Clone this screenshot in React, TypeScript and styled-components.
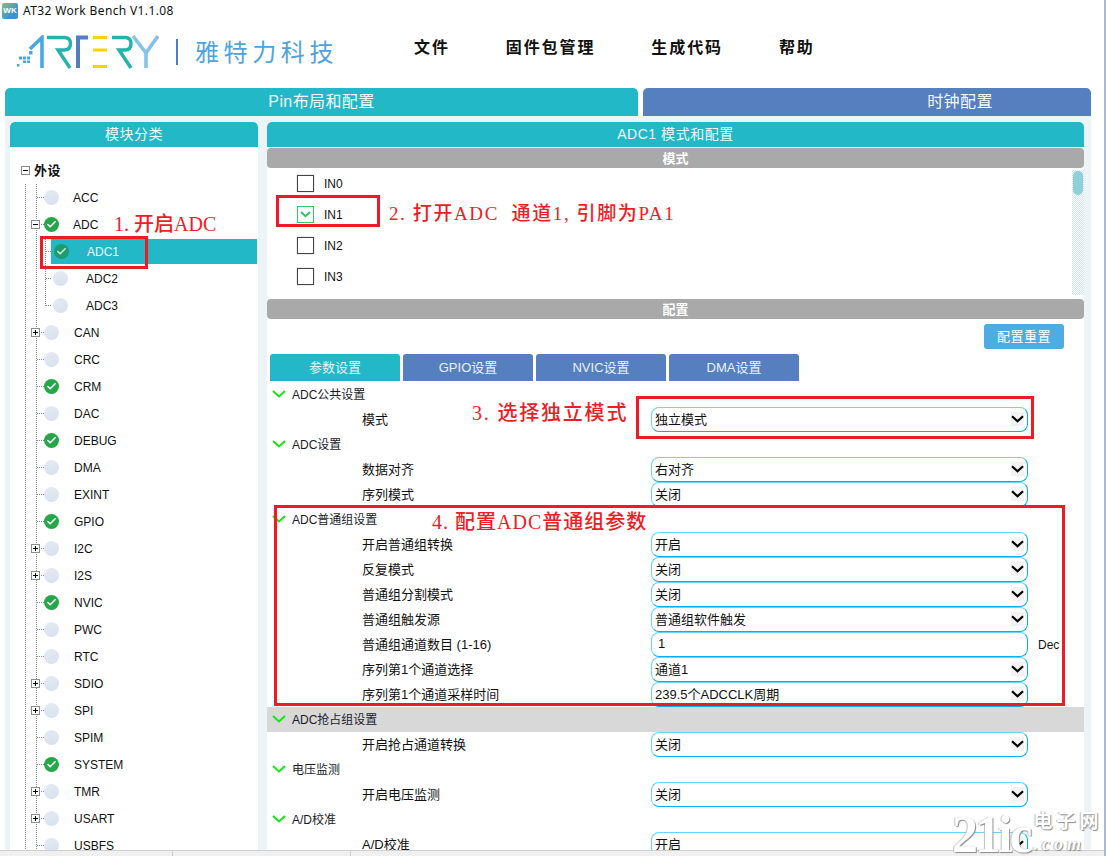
import React from "react";
import styled, { createGlobalStyle } from "styled-components";
import { Check } from "lucide-react";

const GlobalStyle = createGlobalStyle`
  html, body {
    margin: 0;
    padding: 0;
    background: #fff;
  }
  * {
    box-sizing: border-box;
  }
`;

const Frame = styled.div`
  position: relative;
  display: flex;
  flex-direction: column;
  width: 1106px;
  height: 856px;
  overflow: hidden;
  border-right: 2px solid #aeb9cd;
  background: #fff;
  color: #111;
  font-family: "Liberation Sans", "Noto Sans CJK SC", sans-serif;
  font-size: 12px;
`;

const TitleBar = styled.div`
  display: flex;
  align-items: center;
  gap: 5px;
  height: 22px;
  padding: 0 0 1px 2px;
  flex: none;
  font-family: "Noto Sans", sans-serif;
  font-size: 12px;
  letter-spacing: 0.36px;
`;

const AppIcon = styled.div`
  display: flex;
  align-items: center;
  justify-content: center;
  width: 16px;
  height: 16px;
  border-radius: 2px;
  background: linear-gradient(135deg, #7cc576, #3f8fd2 70%);
  color: #fff;
  font-family: "Liberation Sans", sans-serif;
  font-size: 8px;
  font-weight: bold;
  letter-spacing: 0;
`;

const Header = styled.div`
  display: flex;
  align-items: flex-start;
  height: 66px;
  flex: none;
`;

const LogoBox = styled.div`
  display: flex;
  align-items: center;
  width: 414px;
  height: 60px;
  padding-left: 17px;
`;

const BrandText = styled.span`
  padding-bottom: 3px;
  color: #4fa3dc;
  font-family: "Noto Sans CJK SC", sans-serif;
  font-size: 24px;
  letter-spacing: 4.6px;
`;

const Menu = styled.nav`
  display: flex;
  gap: 56px;
  padding-top: 12px;
`;

const MenuItem = styled.span`
  font-family: "Noto Sans CJK SC", sans-serif;
  font-size: 16px;
  font-weight: bold;
  line-height: 24px;
  letter-spacing: 1.9px;
  color: #111;
`;

const TopTabs = styled.div`
  display: flex;
  gap: 5px;
  height: 28px;
  width: 1086px;
  margin-left: 5px;
  flex: none;
`;

const TopTab = styled.div<{ $active?: boolean; $w: number; $shift?: number }>`
  display: flex;
  align-items: center;
  justify-content: center;
  width: ${(p) => p.$w}px;
  padding: 0 0 4px ${(p) => p.$shift ?? 0}px;
  border-radius: 5px 5px 0 0;
  background: ${(p) => (p.$active ? "#22b8c7" : "#567fbf")};
  color: #f2fbfc;
  font-family: "Liberation Sans", "Noto Sans CJK SC", sans-serif;
  font-size: 16px;
  letter-spacing: 0.4px;
`;

const Workspace = styled.div`
  display: flex;
  gap: 9px;
  flex: 1;
  min-height: 0;
  width: 1086px;
  margin-left: 5px;
  padding: 6px 7px 0 5px;
  background: #ecf4f7;
`;

const LeftPanel = styled.div`
  display: flex;
  flex-direction: column;
  width: 248px;
  flex: none;
  background: #fff;
`;

const RightPanel = styled.div`
  display: flex;
  flex-direction: column;
  width: 817px;
  flex: none;
  background: #fff;
`;

const PanelHead = styled.div`
  display: flex;
  align-items: center;
  justify-content: center;
  height: 25px;
  flex: none;
  padding-bottom: 3px;
  border-radius: 5px 5px 0 0;
  background: #22b8c7;
  color: #eefafb;
  font-family: "Liberation Sans", "Noto Sans CJK SC", sans-serif;
  font-size: 14px;
  letter-spacing: 0.55px;
`;

const Tree = styled.div`
  flex: 1;
  overflow: hidden;
  padding-top: 10px;
`;

const RootRow = styled.div`
  position: relative;
  display: flex;
  align-items: center;
  height: 27px;
  padding: 0 0 3px 24px;
  font-family: "Noto Sans CJK SC", sans-serif;
  font-size: 13px;
  font-weight: bold;
  letter-spacing: 0.6px;
`;

const OuterList = styled.div`
  margin-left: 15px;
  border-left: 1px dotted #8a8a8a;
`;

const ModuleList = styled.ul`
  list-style: none;
  margin: 0 0 0 10px;
  padding: 0;
  border-left: 1px dotted #8a8a8a;
`;

const ChildList = styled.ul`
  position: relative;
  list-style: none;
  margin: 0 0 0 8px;
  padding: 0 0 0 1px;

  &::before {
    content: "";
    position: absolute;
    left: 0;
    top: 0;
    bottom: 13px;
    border-left: 1px dotted #8a8a8a;
  }
`;

const ModuleRow = styled.div`
  position: relative;
  display: flex;
  align-items: center;
  height: 27px;
  color: #111;
`;

const Connector = styled.span<{ $w: number }>`
  width: ${(p) => p.$w}px;
  flex: none;
  border-top: 1px dotted #8a8a8a;
`;

const ExpandBox = styled.span<{ $open?: boolean }>`
  position: absolute;
  left: -6px;
  top: 9px;
  width: 9px;
  height: 9px;
  border: 1px solid #8c8c8c;
  background: #fff;

  &::before {
    content: "";
    position: absolute;
    left: 1px;
    top: 3px;
    width: 5px;
    height: 1px;
    background: #000;
  }

  ${(p) =>
    !p.$open &&
    `&::after {
      content: "";
      position: absolute;
      left: 3px;
      top: 1px;
      width: 1px;
      height: 5px;
      background: #000;
    }`}
`;

const RootExpand = styled(ExpandBox)`
  left: 11px;
  top: 9px;
`;

const Bubble = styled.span<{ $on?: boolean; $selected?: boolean }>`
  display: flex;
  align-items: center;
  justify-content: center;
  width: 15px;
  height: 15px;
  flex: none;
  margin-top: -1px;
  border-radius: 50%;
  background: ${(p) =>
    p.$selected
      ? "#1f9b70"
      : p.$on
        ? "#23a748"
        : "linear-gradient(160deg, #e6ebf3, #d6e0ee)"};
  color: ${(p) => (p.$selected ? "#cfe9df" : "#fff")};
`;

const ModuleName = styled.span<{ $offset: number }>`
  margin-left: ${(p) => p.$offset}px;
`;

const SelectedBar = styled.div`
  display: flex;
  align-items: center;
  flex: 1;
  height: 25px;
  margin-right: 1px;
  padding-left: 3px;
  background: #22b8c7;
  color: #e9f8fa;
`;

const PlainChild = styled.div`
  display: flex;
  align-items: center;
  padding-left: 2px;
`;

const GrayBar = styled.div<{ $gap?: number }>`
  display: flex;
  align-items: center;
  justify-content: center;
  height: 20px;
  flex: none;
  margin-top: ${(p) => p.$gap ?? 0}px;
  padding-bottom: 2px;
  border-radius: 4px;
  background: #a9a9a9;
  color: #fff;
  font-family: "Noto Sans CJK SC", sans-serif;
  font-size: 13px;
  font-weight: bold;
`;

const ModeArea = styled.div`
  display: flex;
  justify-content: space-between;
  height: 127px;
  margin-bottom: 4px;
  flex: none;
`;

const PinList = styled.div`
  display: flex;
  flex-direction: column;
  padding-left: 30px;
`;

const PinRow = styled.label`
  display: flex;
  align-items: center;
  gap: 10px;
  height: 31px;
`;

const PinBox = styled.span<{ $on?: boolean }>`
  display: flex;
  align-items: center;
  justify-content: center;
  width: 17px;
  height: 17px;
  border: 1px solid ${(p) => (p.$on ? "#2fd060" : "#444")};
  box-shadow: ${(p) => (p.$on ? "none" : "0 0 1px #999")};
`;

const ScrollTrack = styled.div`
  width: 12px;
  margin-top: 2px;
  padding: 1px;
  background-image: repeating-conic-gradient(#cfe3f5 0 25%, #fff 0 50%);
  background-size: 2px 2px;
`;

const ScrollThumb = styled.div`
  height: 24px;
  border-radius: 5px;
  background: #8dd0da;
`;

const ResetRow = styled.div`
  display: flex;
  justify-content: flex-end;
  height: 35px;
  padding: 5px 20px 0 0;
  flex: none;
`;

const ResetButton = styled.button`
  width: 80px;
  height: 25px;
  padding: 0 0 2px;
  border: 0;
  border-radius: 3px;
  background: #4cade3;
  color: #fff;
  font-family: "Noto Sans CJK SC", sans-serif;
  font-size: 13px;
  letter-spacing: 0.5px;
`;

const ConfigTabs = styled.div`
  display: flex;
  gap: 3px;
  height: 28px;
  padding: 0 0 1px 3px;
  flex: none;
`;

const ConfigTab = styled.div<{ $active?: boolean }>`
  display: flex;
  align-items: center;
  justify-content: center;
  width: 130px;
  padding-bottom: 2px;
  border-radius: 3px 3px 0 0;
  background: ${(p) => (p.$active ? "#22b8c7" : "#567fbf")};
  color: #e8f2fa;
  font-size: 13px;
`;

const SectionRow = styled.div<{ $shaded?: boolean }>`
  display: flex;
  align-items: center;
  gap: 6px;
  height: 25px;
  flex: none;
  padding: 0 0 2px 5px;
  background: ${(p) => (p.$shaded ? "#d8d8d8" : "transparent")};
  color: #1a1a2a;
  font-size: 12px;
`;

const FieldRow = styled.div`
  display: flex;
  align-items: center;
  height: 25px;
  flex: none;
  padding-left: 95px;
`;

const FieldLabel = styled.span`
  width: 289px;
  flex: none;
  padding-bottom: 2px;
  font-size: 13px;
  color: #111;
`;

const Control = styled.div<{ $input?: boolean }>`
  display: flex;
  align-items: center;
  justify-content: space-between;
  width: 377px;
  height: 25px;
  flex: none;
  padding: 0 3px 2px ${(p) => (p.$input ? 6 : 3)}px;
  border: 1px solid #00b0f0;
  border-top-color: #66d5ff;
  border-left-color: #66d5ff;
  border-radius: 8px;
  background: #fff;
  font-size: 13px;
  color: #111;
`;

const ArrowCell = styled.span`
  display: flex;
  align-items: center;
  justify-content: center;
  width: 13px;
  height: 14px;
  background: #f3f3f3;
`;

const Unit = styled.span`
  margin-left: 10px;
  font-size: 12px;
`;

const StatusBar = styled.div`
  display: flex;
  height: 6px;
  flex: none;
  border-top: 1px solid #cfcfcf;
  background: #f0f0f0;
`;

const StatusCell = styled.div<{ $w: number }>`
  width: ${(p) => p.$w}px;
  border-right: 1px solid #cfcfcf;
`;

const RedBox = styled.div<{ $x: number; $y: number; $w: number; $h: number }>`
  position: absolute;
  left: ${(p) => p.$x}px;
  top: ${(p) => p.$y}px;
  width: ${(p) => p.$w}px;
  height: ${(p) => p.$h}px;
  border: 3px solid #ed1c24;
  pointer-events: none;
`;

const Note = styled.div<{ $x: number; $y: number; $size?: number; $gap?: number }>`
  position: absolute;
  left: ${(p) => p.$x}px;
  top: ${(p) => p.$y}px;
  color: #ee1c25;
  font-family: "Liberation Serif", "Noto Sans CJK SC", serif;
  font-size: ${(p) => p.$size ?? 20}px;
  font-weight: 500;
  line-height: 24px;
  letter-spacing: ${(p) => p.$gap ?? 1}px;
  white-space: pre;
`;

const Watermark = styled.div`
  position: absolute;
  left: 952px;
  top: 806px;
  display: flex;
  align-items: flex-start;
  gap: 4px;
  color: #fff;
  text-shadow: 1px 1px 1px #8a8a8a, -1px 0 1px #bcbcbc;
`;

const MarkBig = styled.span`
  margin-top: 4px;
  font-family: "Liberation Serif", serif;
  font-size: 52px;
  font-weight: bold;
  line-height: 50px;
  letter-spacing: -3px;
`;

const MarkSide = styled.div`
  display: flex;
  flex-direction: column;
  align-items: flex-start;
`;

const MarkName = styled.span`
  font-family: "Noto Sans CJK SC", sans-serif;
  font-size: 19px;
  font-weight: bold;
  line-height: 28px;
  letter-spacing: 4px;
`;

const MarkCom = styled.span`
  font-family: "Liberation Serif", serif;
  font-size: 18px;
  font-style: italic;
  font-weight: bold;
  line-height: 21px;
  letter-spacing: 4px;
`;

const Logo = () => (
  <svg width="142" height="34" viewBox="17 36 142 34" fill="none">
    <g fill="#4aa8e0">
      <rect x="17" y="65" width="2.5" height="2.5" />
      <rect x="19" y="57.5" width="3" height="3" />
      <rect x="23" y="57.5" width="3" height="3" />
      <rect x="27" y="57.5" width="3" height="3" />
      <rect x="23" y="61.5" width="3" height="2.5" />
      <rect x="27" y="61.5" width="3" height="2.5" />
      <rect x="29" y="52" width="3.5" height="3.5" />
    </g>
    <path d="M30 50 L42 38.5 V69" stroke="#4aa8e0" strokeWidth="3.6" />
    <path d="M47 38.5 H64 Q70.5 38.5 70.5 44.5 Q70.5 51 64 51 H58 L70 69" stroke="#22b3ad" strokeWidth="3.4" />
    <path d="M88 38.5 H78 V69" stroke="#4f7fc0" strokeWidth="4" />
    <path d="M93 38.5 H107 M93 51 H107 M93 67.5 H107" stroke="#ffd400" strokeWidth="3.2" />
    <path d="M112 38.5 H125 Q131 38.5 131 44.5 Q131 51 125 51 H119 L131 69" stroke="#22b3ad" strokeWidth="3.4" />
    <path d="M133 37 L146 54 L158 37 M146 54 V69" stroke="#85c1ea" strokeWidth="3.6" />
  </svg>
);

const Divider = styled.span`
  width: 2px;
  height: 26px;
  margin: 0 17px 0 17px;
  background: #4f7fc0;
`;

const BubbleIcon = ({ on, selected }: { on?: boolean; selected?: boolean }) => (
  <Bubble $on={on} $selected={selected}>
    {on && <Check size={11} strokeWidth={3.5} />}
  </Bubble>
);

const SectionChevron = () => (
  <svg width="14" height="8" viewBox="0 0 14 8" fill="none">
    <path d="M1 1 L7 6.5 L13 1" stroke="#14e614" strokeWidth="2" />
  </svg>
);

const SelectArrow = () => (
  <svg width="13" height="8" viewBox="0 0 13 8" fill="none">
    <path d="M1 1.2 L6.5 6.2 L12 1.2" stroke="#000" strokeWidth="2.2" />
  </svg>
);

const PinCheck = () => (
  <svg width="11" height="7" viewBox="0 0 11 7" fill="none">
    <path d="M1 1 L5.5 5.2 L10 1" stroke="#22c55e" strokeWidth="1.8" />
  </svg>
);

type Module = { name: string; on?: boolean; plus?: boolean };

const modulesAfterAdc: Module[] = [
  { name: "CAN", plus: true },
  { name: "CRC" },
  { name: "CRM", on: true },
  { name: "DAC" },
  { name: "DEBUG", on: true },
  { name: "DMA" },
  { name: "EXINT" },
  { name: "GPIO", on: true },
  { name: "I2C", plus: true },
  { name: "I2S", plus: true },
  { name: "NVIC", on: true },
  { name: "PWC" },
  { name: "RTC" },
  { name: "SDIO", plus: true },
  { name: "SPI", plus: true },
  { name: "SPIM" },
  { name: "SYSTEM", on: true },
  { name: "TMR", plus: true },
  { name: "USART", plus: true },
  { name: "USBFS" },
];

type Field =
  | { kind: "section"; text: string; shaded?: boolean }
  | { kind: "select"; label: string; value: string }
  | { kind: "input"; label: string; value: string; unit: string };

const fields: Field[] = [
  { kind: "section", text: "ADC公共设置" },
  { kind: "select", label: "模式", value: "独立模式" },
  { kind: "section", text: "ADC设置" },
  { kind: "select", label: "数据对齐", value: "右对齐" },
  { kind: "select", label: "序列模式", value: "关闭" },
  { kind: "section", text: "ADC普通组设置" },
  { kind: "select", label: "开启普通组转换", value: "开启" },
  { kind: "select", label: "反复模式", value: "关闭" },
  { kind: "select", label: "普通组分割模式", value: "关闭" },
  { kind: "select", label: "普通组触发源", value: "普通组软件触发" },
  { kind: "input", label: "普通组通道数目 (1-16)", value: "1", unit: "Dec" },
  { kind: "select", label: "序列第1个通道选择", value: "通道1" },
  { kind: "select", label: "序列第1个通道采样时间", value: "239.5个ADCCLK周期" },
  { kind: "section", text: "ADC抢占组设置", shaded: true },
  { kind: "select", label: "开启抢占通道转换", value: "关闭" },
  { kind: "section", text: "电压监测" },
  { kind: "select", label: "开启电压监测", value: "关闭" },
  { kind: "section", text: "A/D校准" },
  { kind: "select", label: "A/D校准", value: "开启" },
];

const FieldItem = ({ field }: { field: Field }) => {
  if (field.kind === "section") {
    return (
      <SectionRow $shaded={field.shaded}>
        <SectionChevron />
        {field.text}
      </SectionRow>
    );
  }
  if (field.kind === "input") {
    return (
      <FieldRow>
        <FieldLabel>{field.label}</FieldLabel>
        <Control $input>{field.value}</Control>
        <Unit>{field.unit}</Unit>
      </FieldRow>
    );
  }
  return (
    <FieldRow>
      <FieldLabel>{field.label}</FieldLabel>
      <Control>
        {field.value}
        <ArrowCell>
          <SelectArrow />
        </ArrowCell>
      </Control>
    </FieldRow>
  );
};

const App = () => {
  return (
    <Frame>
      <GlobalStyle />
      <TitleBar>
        <AppIcon>WK</AppIcon>
        AT32 Work Bench V1.1.08
      </TitleBar>

      <Header>
        <LogoBox>
          <Logo />
          <Divider />
          <BrandText>雅特力科技</BrandText>
        </LogoBox>
        <Menu>
          <MenuItem>文件</MenuItem>
          <MenuItem>固件包管理</MenuItem>
          <MenuItem>生成代码</MenuItem>
          <MenuItem>帮助</MenuItem>
        </Menu>
      </Header>

      <TopTabs>
        <TopTab $active $w={633}>Pin布局和配置</TopTab>
        <TopTab $w={448} $shift={186}>时钟配置</TopTab>
      </TopTabs>

      <Workspace>
        <LeftPanel>
          <PanelHead>模块分类</PanelHead>
          <Tree>
            <RootRow>
              <RootExpand $open />
              外设
            </RootRow>
            <OuterList>
              <ModuleList>
                <li>
                  <ModuleRow>
                    <Connector $w={7} />
                    <BubbleIcon />
                    <ModuleName $offset={14}>ACC</ModuleName>
                  </ModuleRow>
                </li>
                <li>
                  <ModuleRow>
                    <ExpandBox $open />
                    <Connector $w={7} />
                    <BubbleIcon on />
                    <ModuleName $offset={14}>ADC</ModuleName>
                  </ModuleRow>
                  <ChildList>
                    <li>
                      <ModuleRow>
                        <Connector $w={5} />
                        <SelectedBar>
                          <BubbleIcon on selected />
                          <ModuleName $offset={18}>ADC1</ModuleName>
                        </SelectedBar>
                      </ModuleRow>
                    </li>
                    {["ADC2", "ADC3"].map((name) => (
                      <li key={name}>
                        <ModuleRow>
                          <Connector $w={5} />
                          <PlainChild>
                            <BubbleIcon />
                            <ModuleName $offset={18}>{name}</ModuleName>
                          </PlainChild>
                        </ModuleRow>
                      </li>
                    ))}
                  </ChildList>
                </li>
                {modulesAfterAdc.map((m) => (
                  <li key={m.name}>
                    <ModuleRow>
                      {m.plus && <ExpandBox />}
                      <Connector $w={7} />
                      <BubbleIcon on={m.on} />
                      <ModuleName $offset={15}>{m.name}</ModuleName>
                    </ModuleRow>
                  </li>
                ))}
              </ModuleList>
            </OuterList>
          </Tree>
        </LeftPanel>

        <RightPanel>
          <PanelHead>ADC1 模式和配置</PanelHead>
          <GrayBar $gap={1}>模式</GrayBar>
          <ModeArea>
            <PinList>
              {["IN0", "IN1", "IN2", "IN3"].map((pin) => (
                <PinRow key={pin}>
                  <PinBox $on={pin === "IN1"}>{pin === "IN1" && <PinCheck />}</PinBox>
                  {pin}
                </PinRow>
              ))}
            </PinList>
            <ScrollTrack>
              <ScrollThumb />
            </ScrollTrack>
          </ModeArea>
          <GrayBar>配置</GrayBar>
          <ResetRow>
            <ResetButton>配置重置</ResetButton>
          </ResetRow>
          <ConfigTabs>
            <ConfigTab $active>参数设置</ConfigTab>
            <ConfigTab>GPIO设置</ConfigTab>
            <ConfigTab>NVIC设置</ConfigTab>
            <ConfigTab>DMA设置</ConfigTab>
          </ConfigTabs>
          {fields.map((f, i) => (
            <FieldItem key={i} field={f} />
          ))}
        </RightPanel>
      </Workspace>

      <StatusBar>
        <StatusCell $w={173} />
        <StatusCell $w={178} />
      </StatusBar>

      <RedBox $x={40} $y={236} $w={108} $h={33} />
      <RedBox $x={276} $y={195} $w={104} $h={32} />
      <RedBox $x={636} $y={396} $w={398} $h={43} />
      <RedBox $x={274} $y={505} $w={791} $h={201} />

      <Note $x={114} $y={212} $gap={0}>1. 开启ADC</Note>
      <Note $x={389} $y={202} $size={19} $gap={1.6}>2. 打开ADC  通道1, 引脚为PA1</Note>
      <Note $x={472} $y={401} $gap={1.8}>3. 选择独立模式</Note>
      <Note $x={432} $y={510}>4. 配置ADC普通组参数</Note>

      <Watermark>
        <MarkBig>21ic</MarkBig>
        <MarkSide>
          <MarkName>电子网</MarkName>
          <MarkCom>.com</MarkCom>
        </MarkSide>
      </Watermark>
    </Frame>
  );
};

export default App;
